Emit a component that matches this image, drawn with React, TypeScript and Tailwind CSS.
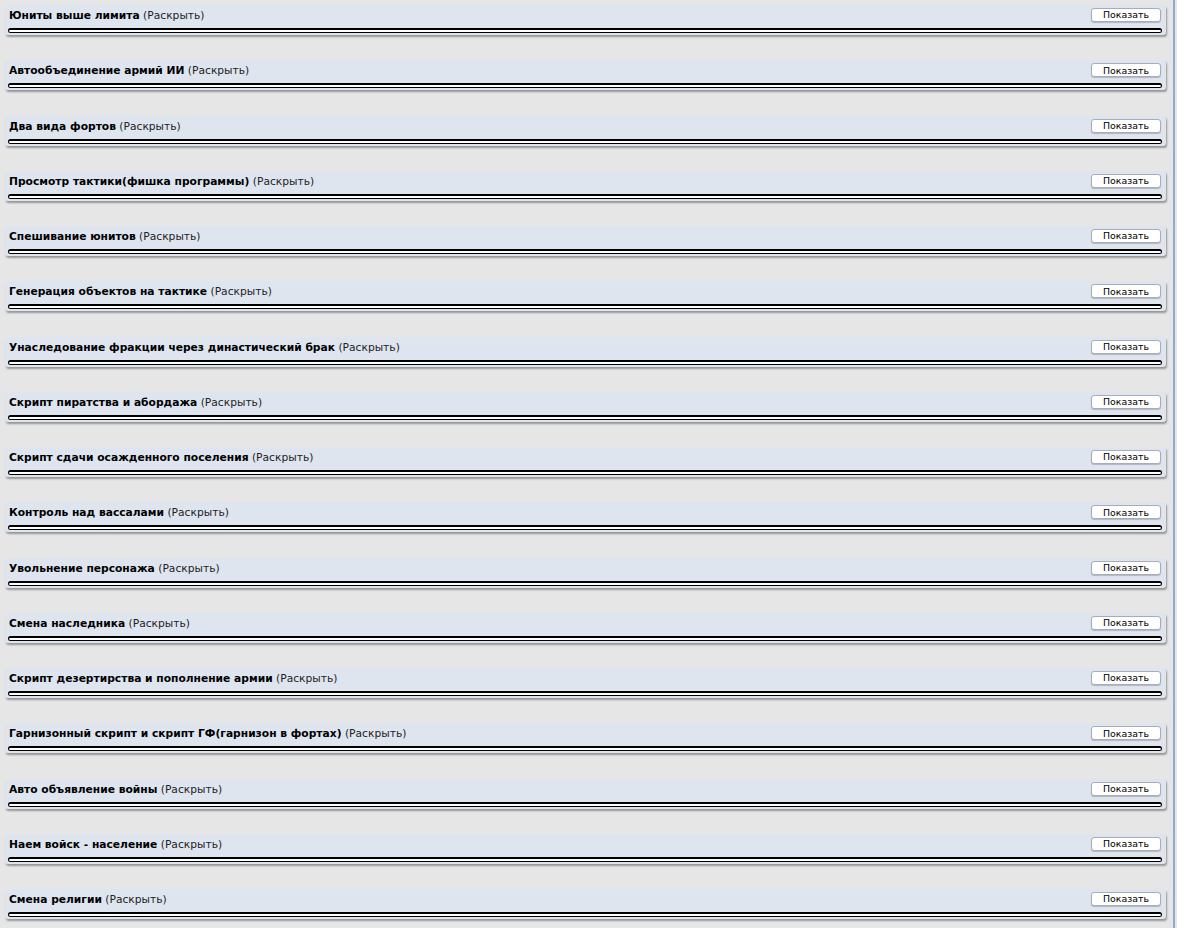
import React from 'react';

const sections = [
    'Юниты выше лимита',
    'Автообъединение армий ИИ',
    'Два вида фортов',
    'Просмотр тактики(фишка программы)',
    'Спешивание юнитов',
    'Генерация объектов на тактике',
    'Унаследование фракции через династический брак',
    'Скрипт пиратства и абордажа',
    'Скрипт сдачи осажденного поселения',
    'Контроль над вассалами',
    'Увольнение персонажа',
    'Смена наследника',
    'Скрипт дезертирства и пополнение армии',
    'Гарнизонный скрипт и скрипт ГФ(гарнизон в фортах)',
    'Авто объявление войны',
    'Наем войск - население',
    'Смена религии',
];

function Spoiler({ title }: { title: string }) {
    return (
        <div className="mb-[25.25px] rounded-[3px] bg-[#dfe5ef] pt-[3px] pb-[2px] shadow-[1px_2px_2px_rgba(0,0,0,0.35)]">
            {/* Header */}
            <div className="flex h-[14px] items-center justify-between pl-[4px] pr-[5px]">
                <div className="pt-[2px] text-[10.7px] leading-[14px] text-black whitespace-nowrap">
                    <span className="font-bold">{title}</span>{' '}
                    <span className="text-[#222]">(Раскрыть)</span>
                </div>
                <button className="flex h-[14px] w-[70px] items-center justify-center rounded-[3px] border border-[#a8adb5] bg-white text-[9.4px] leading-none text-black shadow-[0_1px_1px_rgba(0,0,0,0.2)]">
                    Показать
                </button>
            </div>
            {/* Content bar */}
            <div className="mt-[6px] ml-[3px] mr-[4px] h-[5px] rounded-full border-t-2 border-b border-l border-r border-black bg-white" />
        </div>
    );
}

export default function App() {
    return (
        <div className="flex min-h-screen bg-[#e6e6e6] font-['DejaVu_Sans',Verdana,sans-serif]">
            <div className="w-[1161px] ml-[5px] pt-[5px]">
                {sections.map((s) => (
                    <Spoiler key={s} title={s} />
                ))}
            </div>
            <div className="ml-[7px] w-[2px] bg-[#8eaad0]" />
        </div>
    );
}
